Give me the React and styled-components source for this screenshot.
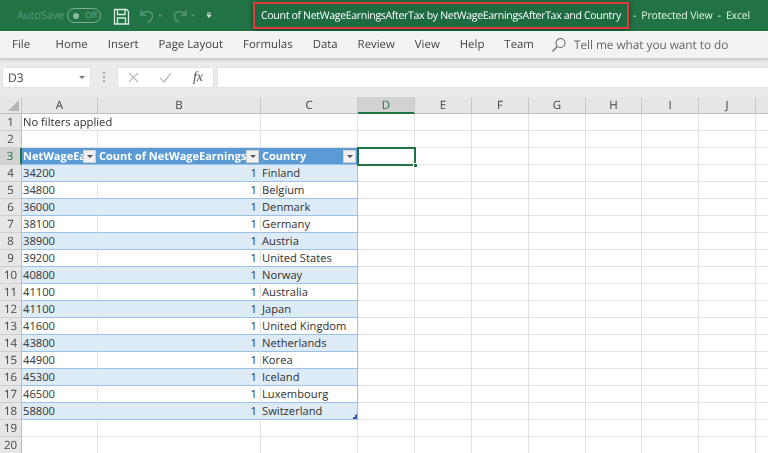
import React from "react";
import styled, { createGlobalStyle } from "styled-components";

const Global = createGlobalStyle`
  html, body { margin: 0; padding: 0; background: #fff; overflow: hidden; }
  body { font-family: "Open Sans", "Noto Sans", "Liberation Sans", sans-serif; text-rendering: geometricPrecision; }
`;
const Page = styled.div`
  width: 768px; height: 453px; overflow: hidden; display: flex; flex-direction: column;
  filter: blur(0.35px);
`;
const TitleBar = styled.div`
  height: 31px; flex: none; background: #217346; display: flex; align-items: center;
  color: #fff; font-size: 12px;
`;
const AutoSave = styled.span`
  margin-left: 17px; width: 45px; color: #5a9a7a; font-size: 10.8px; white-space: nowrap;
`;
const Toggle = styled.span`
  margin-left: 5px; width: 34px; height: 15px; box-sizing: border-box; border: 1px solid #7fae96; border-radius: 8px;
  display: flex; align-items: center; gap: 6px; padding-left: 5px; color: #6fa58a; font-size: 8.5px;
  &::before { content: ""; width: 6px; height: 6px; border-radius: 50%; background: #8db9a3; }
`;
const QuickIcons = styled.svg`
  margin-left: 12px; width: 140px; height: 31px; flex: none;
`;
const TitleBox = styled.div`
  width: 376px; height: 27px; flex: none; box-sizing: border-box; border: 2px solid #e5383b;
  box-shadow: 0 1px 5px rgba(0,0,0,.5); background: #1d6b40; display: flex; align-items: center; justify-content: center;
  color: #fff; font-size: 10.6px; white-space: nowrap; letter-spacing: -0.35px;
`;
const TitleRest = styled.div`
  margin-left: 4px; color: #e4f0e9; font-size: 10.6px; white-space: pre; letter-spacing: -0.2px;
`;
const MenuBar = styled.div`
  height: 27px; flex: none; background: #f3f3f3; display: flex; align-items: center; gap: 20px; padding-left: 12px;
  position: relative; z-index: 1; box-shadow: 0 2px 3px rgba(0,0,0,.16); color: #444; font-size: 11.4px;
`;
const MenuItem = styled.span`
  white-space: nowrap; margin-right: ${p => p.$after || 0}px;
`;
const Search = styled.div`
  display: flex; align-items: center; gap: 7px; margin-left: -3px; color: #666; white-space: nowrap; font-size: 11.85px; letter-spacing: -0.05px;
`;
const FormulaBar = styled.div`
  height: 39px; flex: none; box-sizing: border-box; background: #ebebeb;
  display: flex; align-items: flex-start; padding: 9px 0 0 2px; color: #444; font-size: 12px;
`;
const NameBox = styled.div`
  width: 89px; height: 21px; box-sizing: border-box; background: #fff; border: 1px solid #e2e2e2; display: flex; align-items: center;
  justify-content: space-between; padding: 0 5px; color: #444;
  &::after { content: ""; border: 3px solid transparent; border-top: 3px solid #777; margin-top: 3px; }
`;
const Dots = styled.div`
  width: 2px; height: 10px; margin: 5px 12px 0 12px; flex: none;
  background: repeating-linear-gradient(#aaa 0 2px, transparent 2px 4px);
`;
const FxBox = styled.div`
  width: 97px; height: 21px; box-sizing: border-box; background: #fff; border: 1px solid #e2e2e2; display: flex; align-items: center; justify-content: space-between; padding-right: 10px;
`;
const FormulaInput = styled.div`
  flex: 1; height: 21px; margin-left: 3px; box-sizing: border-box; background: #fff; border: 1px solid #e2e2e2; border-right: none;
`;
const Fx = styled.i`
  font-family: "Liberation Serif", serif; font-size: 14px; color: #555;
`;
const Grid = styled.div`
  flex: 1; display: grid; min-height: 0; overflow: hidden; align-content: start;
  grid-template-columns: 22px 76px 163px 97px 57px 57px 57px 57px 56px 57px 57px 70px;
  grid-template-rows: repeat(21, 17px);
  color: #333; font-size: 11.2px;
`;
const Corner = styled.div`
  background: #e6e6e6; border-right: 1px solid #c8c8c8; border-bottom: 1px solid #bdbdbd; box-sizing: border-box; position: relative;
  &::after { content: ""; position: absolute; right: 2px; bottom: 2px; border-left: 11px solid transparent; border-bottom: 11px solid #b5b5b5; }
`;
const ColHead = styled.div`
  background: ${p => p.$active ? "#d2d2d2" : "#e6e6e6"}; box-sizing: border-box; border-right: 1px solid #c8c8c8;
  border-bottom: ${p => p.$active ? "2px solid #217346" : "1px solid #bdbdbd"}; padding-top: 1px;
  display: flex; align-items: center; justify-content: center; color: ${p => p.$active ? "#217346" : "#444"}; font-size: 11.5px;
`;
const RowHead = styled.div`
  background: ${p => p.$active ? "#d2d2d2" : "#e6e6e6"}; box-sizing: border-box; border-right: ${p => p.$active ? "2px solid #217346" : "1px solid #bdbdbd"};
  border-bottom: 1px solid #cfcfcf; display: flex; align-items: center; justify-content: center; padding-top: 1px;
  color: ${p => p.$active ? "#217346" : "#444"}; font-size: 11.5px;
`;
const Cell = styled.div`
  box-sizing: border-box; border-right: 1px solid #e2e2e2; border-bottom: 1px solid #e2e2e2; background: #fff;
  display: flex; align-items: center; white-space: nowrap; padding: 1px 3px 0 1px; min-width: 0;
  position: relative; line-height: 15px;
  grid-column: span ${p => p.$span || 1};
`;
const DataCell = styled(Cell)`
  background: ${p => p.$band ? "#ddebf7" : "#fff"};
  border-bottom: 1px solid #9bc2e6;
  border-right: 1px solid ${p => p.$band ? "#ddebf7" : "#e2e2e2"};
  justify-content: ${p => p.$right ? "flex-end" : "flex-start"};
  ${p => p.$edge && "border-right: 1px solid #9bc2e6;"}
`;
const HeaderCell = styled(Cell)`
  background: #5b9bd5; color: #fff; font-weight: 700; border-right: none; border-bottom: 1px solid #9bc2e6; overflow: hidden;
  padding: 0 0 0 1px; font-size: 11px;
`;
const HeaderLabel = styled.span`
  flex: 1; overflow: hidden; min-width: 0;
`;
const Filter = styled.span`
  flex: none; width: 13px; height: 13px; margin-right: 2px; background: #f1f1f1; border: 1px solid #d0d0d0; box-sizing: border-box;
  display: flex; align-items: center; justify-content: center;
  &::after { content: ""; border: 3px solid transparent; border-top: 3px solid #555; margin-top: 3px; }
`;
const Selected = styled(Cell)`
  outline: 2px solid #217346; outline-offset: -1px; z-index: 2; border: none;
  &::after { content: ""; position: absolute; right: -3px; bottom: -3px; width: 5px; height: 5px; background: #217346; border: 1px solid #fff; box-sizing: border-box; }
`;
const ResizeMark = styled.span`
  position: absolute; right: 0; bottom: 0; width: 5px; height: 5px; background: linear-gradient(135deg, transparent 50%, #2f5f9e 50%);
`;

const cols = ["A","B","C","D","E","F","G","H","I","J",""];
const rows = [
  [34200,"Finland"],[34800,"Belgium"],[36000,"Denmark"],[38100,"Germany"],[38900,"Austria"],
  [39200,"United States"],[40800,"Norway"],[41100,"Australia"],[41100,"Japan"],[41600,"United Kingdom"],
  [43800,"Netherlands"],[44900,"Korea"],[45300,"Iceland"],[46500,"Luxembourg"],[58800,"Switzerland"],
];
const menus = ["Home","Insert","Page Layout","Formulas","Data","Review","View","Help","Team"];
const Blanks = ({ n, k }) => Array.from({ length: n }, (_, i) => <Cell key={k + i} />);

export default function App() {
  return (
    <Page>
      <Global />
      <TitleBar>
        <AutoSave>AutoSave</AutoSave>
        <Toggle>Off</Toggle>
        <QuickIcons viewBox="0 0 140 31" fill="none">
          <g stroke="#dcebe3" strokeWidth="1.3">
            <path d="M1.5 9.5h12l2 2v12.500h-14z" />
            <path d="M4.500 9.500v5h7.500v-5M4.500 24v-6h8v6" />
          </g>
          <g stroke="#5a9a7a" strokeWidth="1.3">
            <path d="M28 10v5h5M28.500 14.500c3-4.500 11-3.500 11 1.500 0 3-2 5-5 6.500" />
            <path d="M73 10v5h-5M72.500 14.500c-3-4.500-11-3.500-11 1.500 0 3 2 5 5 6.500" />
          </g>
          <path d="M45 14.500h4l-2 2.500zM78 14.500h4l-2 2.500z" fill="#5a9a7a" />
          <path d="M94 13h4M94 15h4l-2 2.500z" stroke="#cfe2d8" strokeWidth="1" fill="#cfe2d8" />
        </QuickIcons>
        <TitleBox>Count of NetWageEarningsAfterTax by NetWageEarningsAfterTax and Country</TitleBox>
        <TitleRest>{"-  Protected View  -  Excel"}</TitleRest>
      </TitleBar>
      <MenuBar>
        <MenuItem $after={5.5}>File</MenuItem>
        {menus.map(m => <MenuItem key={m}>{m}</MenuItem>)}
        <Search>
          <svg width="16" height="16" viewBox="0 0 16 16" fill="none" stroke="#666" strokeWidth="1.1">
            <circle cx="9.500" cy="6" r="4.500" /><path d="M6.300 9.500 1.500 14.500" />
          </svg>
          Tell me what you want to do
        </Search>
      </MenuBar>
      <FormulaBar>
        <NameBox>D3</NameBox>
        <Dots />
        <FxBox>
          <svg width="70" height="19" viewBox="0 0 70 19" fill="none" stroke="#bbb" strokeWidth="1.300">
            <path d="M11 5l9 9M20 5l-9 9" />
            <path d="M42 10l4 4 7-9" />
          </svg>
          <Fx>fx</Fx>
        </FxBox>
        <FormulaInput />
      </FormulaBar>
      <Grid>
        <Corner />
        {cols.map((c, i) => <ColHead key={i} $active={c === "D"}>{c}</ColHead>)}

        <RowHead>1</RowHead><Cell $span={2}>No filters applied</Cell><Blanks n={9} k="a" />
        <RowHead>2</RowHead><Blanks n={11} k="b" />
        <RowHead $active>3</RowHead>
        <HeaderCell><HeaderLabel>NetWageEarningsAfterTax</HeaderLabel><Filter /></HeaderCell>
        <HeaderCell><HeaderLabel>Count of NetWageEarningsAfterTax</HeaderLabel><Filter /></HeaderCell>
        <HeaderCell><HeaderLabel>Country</HeaderLabel><Filter /></HeaderCell>
        <Selected /><Blanks n={7} k="c" />

        {rows.map(([v, c], i) => {
          const band = i % 2 === 0;
          return (
            <React.Fragment key={i}>
              <RowHead>{i + 4}</RowHead>
              <DataCell $band={band}>{v}</DataCell>
              <DataCell $band={band} $right>1</DataCell>
              <DataCell $band={band} $edge>{c}{i === 14 && <ResizeMark />}</DataCell>
              <Blanks n={8} k={"r" + i} />
            </React.Fragment>
          );
        })}
        <RowHead>19</RowHead><Blanks n={11} k="d" />
        <RowHead>20</RowHead><Blanks n={11} k="e" />
      </Grid>
    </Page>
  );
}
